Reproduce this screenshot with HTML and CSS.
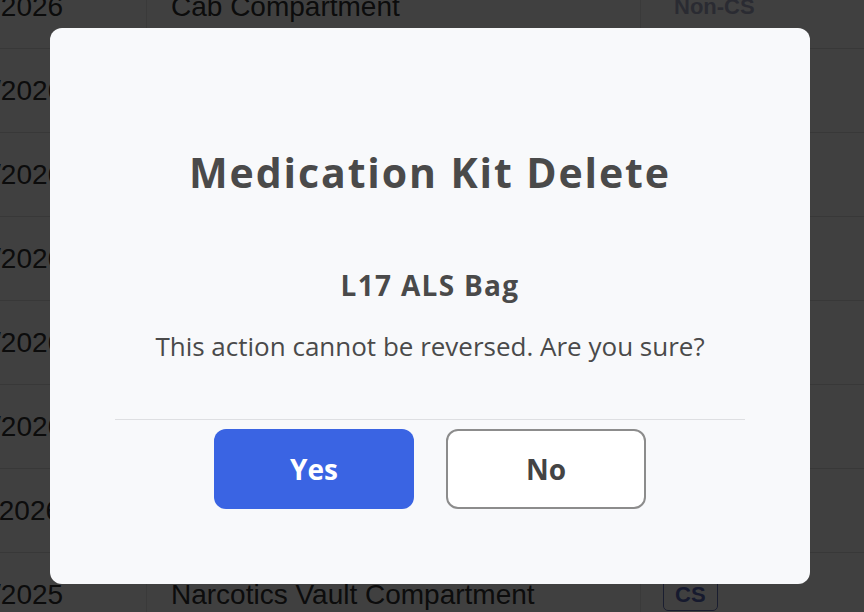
FILE: index.html
```html
<!DOCTYPE html>
<html lang="en">
<head>
<meta charset="utf-8">
<title>Medication Kit Delete</title>
<link rel="stylesheet" href="styles.css">
</head>
<body>
<div class="table">
  <div class="row">
    <div class="cell c-date">01/15/2026</div>
    <div class="cell c-name">Cab Compartment</div>
    <div class="cell c-type"><span class="badge badge-noncs">Non-CS</span></div>
  </div>
  <div class="row">
    <div class="cell c-date">02/03/2026</div>
    <div class="cell c-name">Drug Box A</div>
    <div class="cell c-type"><span class="badge badge-noncs">Non-CS</span></div>
  </div>
  <div class="row">
    <div class="cell c-date">02/18/2026</div>
    <div class="cell c-name">Drug Box B</div>
    <div class="cell c-type"><span class="badge badge-noncs">Non-CS</span></div>
  </div>
  <div class="row">
    <div class="cell c-date">03/02/2026</div>
    <div class="cell c-name">Airway Kit</div>
    <div class="cell c-type"><span class="badge badge-noncs">Non-CS</span></div>
  </div>
  <div class="row">
    <div class="cell c-date">03/21/2026</div>
    <div class="cell c-name">L17 ALS Bag</div>
    <div class="cell c-type"><span class="badge badge-noncs">Non-CS</span></div>
  </div>
  <div class="row">
    <div class="cell c-date">04/09/2026</div>
    <div class="cell c-name">Pediatric Kit</div>
    <div class="cell c-type"><span class="badge badge-noncs">Non-CS</span></div>
  </div>
  <div class="row">
    <div class="cell c-date">05/11/2026</div>
    <div class="cell c-name">Trauma Bag</div>
    <div class="cell c-type"><span class="badge badge-noncs">Non-CS</span></div>
  </div>
  <div class="row">
    <div class="cell c-date">12/30/2025</div>
    <div class="cell c-name">Narcotics Vault Compartment</div>
    <div class="cell c-type"><span class="badge badge-cs">CS</span></div>
  </div>
</div>

<div class="overlay">
  <div class="modal">
    <h1 class="modal-title">Medication Kit Delete</h1>
    <p class="modal-item">L17 ALS Bag</p>
    <p class="modal-msg">This action cannot be reversed. Are you sure?</p>
    <hr class="modal-divider">
    <div class="modal-actions">
      <button class="btn btn-yes">Yes</button>
      <button class="btn btn-no">No</button>
    </div>
  </div>
</div>
</body>
</html>
```

FILE: styles.css
```css
* { box-sizing: border-box; }

html, body {
  margin: 0;
  padding: 0;
  width: 864px;
  height: 612px;
  overflow: hidden;
  background: #ffffff;
}

body {
  font-family: "Liberation Sans", Arial, sans-serif;
  color: #333333;
}

.table {
  margin-top: -35px;
  margin-left: -101px;
  width: 1100px;
}

.row {
  display: grid;
  grid-template-columns: 248px 494px 1fr;
  height: 84px;
  border-bottom: 1px solid #e0e0e0;
}

.cell {
  display: flex;
  align-items: center;
  padding: 0 24px;
  font-size: 28px;
  white-space: nowrap;
  overflow: hidden;
}

.c-date { border-right: 1px solid #e6e6e6; }
.c-name { border-right: 1px solid #e6e6e6; }
.c-type { padding-left: 22px; }

.badge {
  display: inline-block;
  font-size: 22px;
  font-weight: 700;
  line-height: 26px;
  padding: 2px 10px;
  border-radius: 5px;
}

.badge-noncs {
  color: #a9adc6;
  border: 1px solid transparent;
}

.badge-cs {
  color: #5a68b6;
  border: 1px solid #6a78c0;
  padding: 2px 11px;
}

.overlay {
  position: fixed;
  inset: 0;
  background: rgba(0, 0, 0, 0.75);
  display: flex;
  align-items: center;
  justify-content: center;
  padding-right: 4px;
}

.modal {
  width: 760px;
  height: 556px;
  background: #f8f9fb;
  border-radius: 12px;
  padding: 120px 65px 0;
  display: flex;
  flex-direction: column;
  align-items: center;
  font-family: "Open Sans", Lato, sans-serif;
  color: #4a4a4a;
}

.modal-title {
  margin: 0;
  font-size: 41px;
  line-height: 48px;
  font-weight: 700;
  letter-spacing: 1.9px;
}

.modal-item {
  margin: 72px 0 0;
  font-size: 28px;
  line-height: 34px;
  font-weight: 700;
  letter-spacing: 1.3px;
}

.modal-msg {
  margin: 27px 0 0;
  font-size: 26px;
  line-height: 34px;
  font-weight: 400;
}

.modal-divider {
  align-self: stretch;
  margin: 56px 0 0;
  border: 0;
  border-top: 1px solid #dedfe2;
  height: 0;
}

.modal-actions {
  margin-top: 9px;
  display: flex;
  gap: 32px;
}

.btn {
  width: 200px;
  height: 80px;
  border-radius: 12px;
  font-family: "Open Sans", Lato, sans-serif;
  font-size: 28px;
  font-weight: 700;
  cursor: pointer;
}

.btn-yes {
  background: #3a64e3;
  color: #ffffff;
  border: 0;
}

.btn-no {
  background: #ffffff;
  color: #444444;
  border: 2px solid #8c8c8c;
}
```
